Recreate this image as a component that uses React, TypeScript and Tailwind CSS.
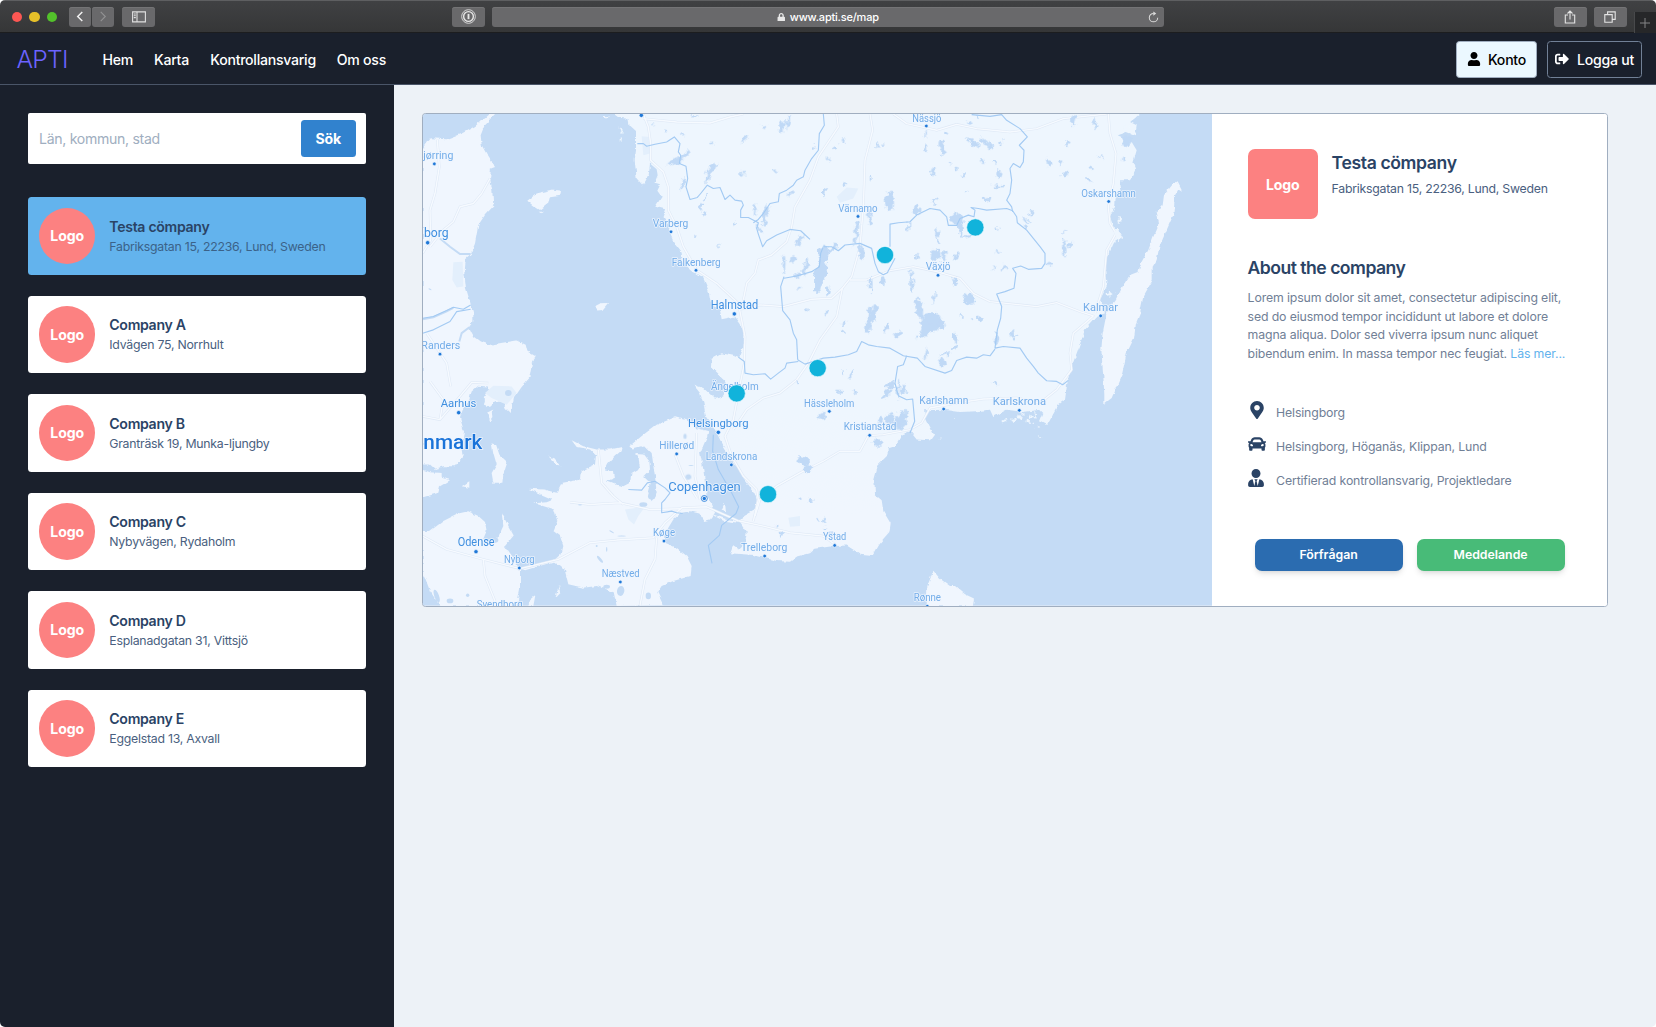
import React from 'react';
import { FaUser, FaSignOutAlt, FaMapMarkerAlt, FaCar, FaUserTie, FaLock } from 'react-icons/fa';

/* ---------- Map data (map units: 3 per pixel) ---------- */

const SWEDEN =
  'M607 38 L627 52 L655 55 L659 75 L678 92 L678 150 L674 180 L680 235 L699 256 L716 225 L720 190 L740 207 L743 225 L733 250 L750 255 L742 272 L755 290 L736 320 L768 328 L760 350 L775 375 L780 400 L793 430 L815 458 L818 488 L850 515 L880 535 L895 570 L903 610 L930 630 L935 658 L975 650 L992 672 L1003 710 L1000 745 L988 775 L970 768 L935 760 L905 777 L903 800 L938 835 L948 860 L940 890 L915 897 L880 865 L850 855 L870 880 L880 910 L888 950 L915 990 L940 1040 L965 1080 L1000 1135 L1033 1180 L1040 1200 L1035 1230 L1000 1250 L990 1270 L1010 1300 L1005 1330 L985 1350 L968 1340 L960 1362 L1030 1367 L1100 1385 L1140 1387 L1160 1372 L1200 1362 L1216 1348 L1275 1340 L1310 1338 L1350 1363 L1387 1367 L1405 1335 L1438 1298 L1442 1272 L1420 1235 L1415 1202 L1395 1185 L1393 1140 L1405 1095 L1433 1067 L1433 1047 L1455 1040 L1475 1005 L1500 995 L1520 1020 L1560 1022 L1572 1005 L1547 955 L1542 932 L1600 930 L1650 937 L1700 935 L1740 930 L1750 952 L1790 930 L1840 937 L1890 930 L1900 940 L1890 965 L1912 976 L1945 915 L1965 900 L1972 850 L1985 800 L2002 755 L2025 690 L2060 650 L2085 640 L2070 600 L2090 560 L2085 500 L2098 455 L2112 425 L2132 410 L2112 385 L2100 350 L2115 320 L2118 285 L2135 280 L2130 240 L2160 240 L2178 205 L2170 185 L2180 150 L2165 125 L2120 105 L2150 95 L2175 105 L2180 75 L2160 65 L2185 45 L2195 38 Z';

const SMOOTH_LAND = [
  'M38 148 L62 114 L110 117 L155 100 L195 78 L240 38 L258 38 L225 72 L212 105 L215 135 L232 165 L255 200 L243 205 L240 235 L247 270 L250 318 L225 345 L205 375 L195 430 L182 462 L168 475 L163 520 L168 565 L182 612 L190 640 L190 665 L176 683 L190 710 L210 725 L240 735 L320 722 L347 735 L352 755 L378 770 L366 788 L358 835 L335 862 L312 895 L303 940 L287 925 L280 905 L255 908 L240 922 L222 915 L225 895 L237 870 L232 860 L205 858 L185 875 L178 900 L160 925 L150 955 L162 995 L155 1050 L158 1070 L135 1100 L100 1100 L75 1108 L60 1095 L38 1095 Z',
  'M38 1110 L60 1118 L95 1120 L95 1135 L120 1142 L90 1160 L85 1180 L38 1195 Z',
  'M245 1030 L258 1035 L268 1065 L292 1088 L280 1125 L277 1150 L250 1150 L245 1120 L260 1095 L250 1060 Z',
  'M155 1160 L178 1145 L178 1165 Z M415 1070 L435 1078 L455 1100 L440 1095 Z M230 940 L248 930 L250 955 L242 967 Z',
  'M38 1295 L60 1295 L100 1265 L145 1242 L175 1235 L205 1250 L225 1268 L230 1295 L220 1318 L248 1330 L265 1312 L280 1280 L275 1240 L290 1270 L311 1308 L295 1328 L285 1340 L310 1375 L330 1415 L330 1470 L320 1520 L90 1520 L60 1475 L45 1435 L38 1420 Z',
  'M355 1520 L365 1495 L376 1488 L370 1520 Z M475 1440 L487 1420 L480 1445 Z M437 1493 L447 1455 L450 1480 Z',
  'M485 1022 L520 1040 L560 1050 L600 1050 L635 1042 L632 1055 L615 1070 L595 1090 L585 1110 L612 1115 L615 1135 L590 1145 L615 1155 L640 1160 L660 1150 L665 1120 L690 1105 L685 1070 L675 1060 L700 1062 L718 1085 L720 1110 L700 1130 L720 1150 L712 1180 L725 1205 L740 1180 L735 1130 L725 1060 L705 1040 L668 1050 L658 1040 L700 1005 L740 975 L795 953 L830 962 L860 985 L895 995 L890 1015 L870 1060 L880 1110 L885 1150 L890 1190 L905 1215 L915 1240 L900 1260 L883 1265 L868 1242 L840 1235 L815 1240 L790 1260 L775 1285 L765 1310 L765 1330 L800 1345 L830 1370 L845 1400 L842 1430 L790 1445 L755 1460 L742 1480 L760 1518 L620 1520 L612 1480 L560 1460 L520 1465 L475 1455 L465 1415 L450 1400 L430 1385 L455 1362 L460 1340 L450 1310 L430 1295 L442 1265 L432 1230 L373 1211 L410 1208 L430 1200 L355 1168 L400 1170 L440 1180 L455 1150 L510 1140 L512 1115 L555 1095 L558 1068 L540 1050 L500 1042 Z',
  'M1550 1520 L1552 1460 L1570 1414 L1590 1438 L1620 1460 L1635 1460 L1665 1485 L1692 1498 L1688 1520 Z',
  'M352 302 L380 280 L430 268 L453 272 L452 284 L420 288 L415 310 L390 330 L368 315 Z M386 335 L402 335 L394 340 Z',
  'M553 620 L572 610 L594 609 L577 630 L562 632 Z',
  'M2290 250 L2300 243 L2316 275 L2305 268 L2295 285 L2293 310 L2290 345 L2270 390 L2248 440 L2240 480 L2228 500 L2228 540 L2200 590 L2190 640 L2178 670 L2172 715 L2150 760 L2137 820 L2105 895 L2083 912 L2083 885 L2080 830 L2074 750 L2078 700 L2090 640 L2118 600 L2140 555 L2160 525 L2185 515 L2195 485 L2215 450 L2230 410 L2247 370 L2240 335 L2258 315 L2262 285 Z',
  'M895 1240 L945 1258 L985 1264 L985 1270 L940 1264 Z M330 1408 L440 1378 L442 1384 L340 1414 Z M935 1230 L945 1208 L948 1235 Z',
];

/* x, y, width, height, rotation */
const LAKES: number[][] = [
  [1115, 76, 18, 34, 20], [1134, 66, 10, 40, 10], [1060, 76, 14, 8, 10], [1000, 118, 30, 10, -35], [905, 130, 14, 12, 0],
  [768, 92, 10, 8, 0], [820, 102, 20, 6, 0], [728, 72, 14, 5, 0], [855, 45, 20, 6, 0], [800, 180, 72, 14, -25], [830, 160, 30, 12, -50],
  [905, 205, 12, 50, 40], [893, 235, 12, 26, 20], [820, 250, 12, 30, 10], [998, 221, 14, 12, 0], [1097, 209, 14, 8, 0],
  [873, 318, 10, 26, 20], [882, 342, 7, 20, -20], [886, 290, 5, 24, 20], [973, 366, 10, 10, 0], [860, 407, 14, 6, -20], [925, 438, 20, 5, 5],
  [1138, 282, 22, 8, -40], [1066, 345, 14, 72, 12], [1036, 330, 8, 40, 5], [1046, 385, 10, 30, -30], [1170, 420, 14, 40, 20],
  [1122, 490, 9, 56, 0], [1150, 478, 20, 18, 0], [1186, 500, 14, 50, 10], [1162, 525, 20, 14, 0], [1168, 565, 10, 8, 0], [1192, 632, 10, 14, 20],
  [1272, 142, 14, 8, -20], [1300, 118, 8, 20, 10], [1257, 176, 7, 16, 0], [1403, 134, 8, 22, 0], [1420, 133, 5, 8, 0], [1211, 142, 8, 14, 0],
  [1544, 102, 7, 18, 0], [1547, 145, 9, 22, 0], [1598, 142, 18, 44, -10], [1608, 100, 14, 9, 30], [1678, 68, 14, 10, 30], [1690, 126, 50, 14, 30],
  [1722, 125, 40, 12, 35], [1745, 138, 22, 14, 30], [1568, 214, 10, 26, 10], [1382, 237, 6, 18, 0], [1303, 252, 12, 12, 0], [1243, 278, 8, 22, 0],
  [1440, 305, 24, 60, -5], [1378, 350, 12, 50, -15], [1340, 390, 14, 56, 5], [1333, 425, 10, 20, 0], [1354, 455, 18, 50, -10],
  [1520, 330, 16, 36, 0], [1572, 305, 8, 26, 30], [1495, 377, 6, 30, 0], [1580, 400, 9, 30, 0], [1584, 425, 8, 18, 0], [1575, 465, 34, 28, 20],
  [1602, 468, 14, 42, 10], [1640, 470, 12, 28, 30], [1522, 470, 14, 10, 0], [1640, 355, 38, 30, 0], [1652, 385, 14, 50, -10], [1672, 408, 28, 10, -10],
  [1765, 257, 38, 8, 5], [1730, 298, 28, 8, -10], [1671, 275, 18, 5, 0], [1620, 192, 7, 8, 0], [1643, 205, 10, 16, -30], [1660, 225, 12, 14, 0],
  [1716, 185, 10, 26, -15], [1752, 186, 14, 8, 0], [1765, 222, 18, 20, 0], [1773, 128, 10, 16, 0], [1700, 50, 8, 16, 0],
  [1990, 55, 16, 40, 0], [2055, 70, 8, 40, 0], [1915, 185, 12, 26, -15], [1952, 187, 14, 14, 0], [1965, 222, 20, 12, 0], [1975, 128, 12, 18, 0],
  [2072, 168, 30, 4, 30], [2045, 204, 14, 8, 30], [2036, 240, 20, 12, 20], [2142, 177, 12, 12, 0], [2150, 120, 30, 30, 0],
  [1863, 341, 18, 9, -20], [1848, 360, 8, 30, -40], [1845, 378, 12, 10, 20], [1963, 445, 12, 55, -5], [1980, 435, 12, 20, 40], [1965, 396, 16, 5, 0],
  [1920, 490, 22, 8, 0], [1761, 387, 10, 10, 0], [1763, 456, 12, 7, 0], [1782, 500, 14, 14, 40], [1751, 507, 8, 16, 10],
  [1240, 460, 34, 46, 10], [1232, 520, 34, 90, 15], [1222, 560, 20, 40, 0], [1262, 450, 10, 40, 50], [1255, 575, 8, 30, 0], [1275, 438, 18, 14, 0],
  [1418, 545, 12, 20, 0], [1382, 555, 6, 50, 0], [1385, 645, 28, 50, 20], [1375, 680, 18, 40, 10], [1395, 625, 12, 24, 0], [1430, 680, 12, 28, 10],
  [1505, 545, 9, 70, -5], [1527, 625, 22, 60, -12], [1560, 670, 60, 60, -20], [1580, 660, 30, 40, 0], [1545, 690, 22, 50, 20], [1595, 675, 24, 24, 0],
  [1572, 595, 6, 40, 20], [1680, 600, 32, 34, 10], [1664, 585, 14, 10, 30], [1635, 545, 14, 18, 0], [1708, 658, 12, 22, -20], [1635, 712, 8, 30, 0],
  [1635, 740, 10, 20, 20], [1605, 762, 40, 8, -20], [1462, 705, 30, 14, -50], [1550, 760, 8, 40, 10], [1520, 712, 12, 8, 30], [1300, 672, 12, 14, 0],
  [1299, 693, 10, 8, 0], [1252, 640, 10, 14, 0], [1655, 645, 6, 14, 0], [1681, 661, 14, 5, -20], [1808, 705, 24, 16, 50], [1760, 715, 14, 30, 0],
  [1600, 788, 26, 24, 0], [1298, 816, 6, 16, 0], [1325, 822, 10, 24, 20], [1288, 875, 16, 10, 0], [1332, 877, 12, 12, 0], [1238, 948, 18, 16, 0],
  [1755, 850, 16, 8, 40], [1442, 855, 26, 20, -20], [1430, 882, 14, 40, 40], [1480, 870, 16, 24, 0], [1464, 870, 8, 60, 0], [1472, 962, 34, 50, 20],
  [1438, 958, 22, 40, 30], [1455, 975, 30, 20, 0], [1488, 948, 8, 40, 0], [1410, 965, 12, 30, 30], [1403, 1030, 18, 30, -30], [1178, 1085, 40, 22, 20],
  [1195, 1105, 30, 20, 0], [1204, 1200, 18, 16, 0], [1168, 1192, 12, 8, 0], [1098, 1275, 8, 6, 0], [1115, 1308, 8, 14, 0], [1226, 1258, 8, 12, 0],
  [1245, 1265, 8, 16, 0], [1244, 1285, 10, 6, 0], [1165, 848, 10, 8, -30], [1260, 1303, 8, 16, 0],
];

const COAST_BITS: number[][] = [
  [635, 90, 10, 18, 0], [632, 118, 6, 16, 0], [590, 48, 12, 8, 0], [640, 100, 6, 10, 0], [2128, 360, 12, 12, 0], [2098, 580, 18, 12, -30],
  [1785, 962, 12, 8, 0], [1812, 960, 16, 14, 0], [1830, 950, 14, 20, 10], [1855, 965, 18, 14, 30], [1890, 1010, 5, 6, 0], [1595, 1018, 5, 4, 0],
  [1633, 956, 4, 3, 0], [2125, 405, 24, 30, 0], [1870, 950, 20, 10, 20], [2150, 80, 16, 20, 0], [1885, 985, 10, 4, 0],
];

/* Inlets and lakes inside Denmark */
const DK_WATER: number[][] = [
  [205, 875, 24, 22, 0], [210, 905, 28, 20, 0], [295, 880, 20, 18, 0], [835, 1132, 18, 16, -20], [783, 1035, 14, 18, -30], [825, 1010, 10, 16, 0],
  [570, 1380, 26, 8, 50], [605, 1297, 16, 4, 30], [635, 1310, 26, 3, 0], [843, 1098, 16, 3, 0], [510, 1216, 12, 4, 0], [590, 1350, 4, 14, 0],
  [560, 1340, 6, 6, 0], [700, 1215, 24, 14, 0], [725, 1190, 22, 20, 0], [60, 568, 10, 4, 30], [632, 1475, 22, 30, 10], [80, 1490, 14, 40, -20],
  [120, 1505, 20, 14, 0], [173, 1488, 10, 10, 0], [715, 1490, 16, 20, 0], [590, 1462, 20, 12, 0], [255, 1322, 20, 16, 0],
];

const BORDERS = [
  'M682 130 L700 130 L710 138 L735 132 L770 125 L793 110 L810 130 L805 155 L812 165 L808 190 L828 198 L833 235 L828 260 L840 298 L862 292 L872 280 L892 255 L910 265 L930 262 L945 298 L960 285 L975 300 L995 303 L1000 315 L992 330 L992 352 L1015 352 L1045 368 L1040 385 L1045 402 L1058 440 L1070 422 L1100 405 L1140 388 L1172 392 L1200 418',
  'M1030 368 L1045 358 L1060 340 L1080 310 L1105 305 L1108 280 L1130 270 L1150 255 L1160 240 L1180 230 L1185 210 L1205 175 L1225 150 L1228 100 L1243 75 L1240 41',
  'M1122 530 L1112 560 L1118 632 L1140 660 L1150 700 L1160 720 L1163 780',
  'M1122 535 L1160 528 L1205 515 L1228 500 L1232 460 L1240 440 L1265 440 L1285 452 L1305 435 L1350 430 L1385 445 L1395 490 L1405 515 L1420 524 L1432 518 L1455 475',
  'M1440 440 L1440 372 L1465 368 L1500 365 L1520 345 L1560 325 L1590 330 L1610 350 L1615 376 L1640 376 L1650 355 L1675 345 L1692 350 L1695 330 L1683 322 L1705 325 L1730 330 L1790 325 L1808 332 L1820 350 L1822 368 L1850 390 L1890 440 L1905 460 L1905 490 L1895 505 L1855 508 L1832 498 L1808 505 L1818 520 L1812 565 L1785 575 L1760 582 L1775 620 L1772 655 L1762 690 L1755 745 L1780 740 L1830 745 L1850 775 L1870 800 L1885 820 L1910 843 L1940 845 L1958 855 L1975 842',
  'M1685 43 L1740 48 L1775 43 L1790 60 L1830 85 L1852 110 L1828 135 L1842 150 L1840 185 L1830 202 L1810 190 L1800 205 L1805 240 L1800 280 L1790 300 L1805 320 L1808 335',
  'M985 772 L1003 785 L1005 820 L1030 825 L1065 822 L1082 838 L1105 820 L1125 805 L1130 790 L1165 785',
  'M1163 780 L1185 793 L1240 775 L1275 772 L1315 765 L1340 755 L1355 725 L1375 735 L1400 740 L1440 745 L1480 768 L1522 775 L1545 800 L1605 820 L1625 812 L1640 782 L1670 772 L1700 775 L1720 765 L1740 768 L1755 748',
  'M1490 768 L1480 795 L1463 800 L1455 850 L1465 888 L1490 900 L1508 898 L1514 965 L1500 1000',
  'M910 1005 L908 1055 L925 1110 L965 1180 L986 1222 L978 1242 L935 1278 L928 1308 L895 1338 L906 1392',
  'M655 1170 L695 1172 L712 1150 L735 1145 L765 1165 L780 1180 L765 1200 L755 1210 L755 1240 L785 1235 L800 1240 L818 1242',
  'M38 655 L70 650 L110 632 L130 622 L160 628 L182 615',
  'M38 700 L70 690 L120 665 L140 635 L182 628',
];

const ROADS = [
  'M82 118 L88 200 L75 280 L60 330 L62 420 L38 460',
  'M240 235 L215 280 L190 310 L150 320 L130 365 L100 390 L60 440',
  'M700 41 L715 80 L722 130 L722 180 L760 215 L775 260 L775 330 L800 380 L820 440 L860 510 L920 550 L985 610 L1005 710 L1003 790 L985 880 L970 960 L945 1010 L965 1070 L1000 1130 L1040 1170 L1045 1200 L1030 1265',
  'M700 55 L800 65 L900 68 L960 50 L1000 41',
  'M985 630 L1050 615 L1120 620 L1205 598 L1265 595 L1297 565 L1325 530 L1350 440 L1360 320 L1365 180 L1388 90 L1380 41',
  'M1000 600 L1010 550 L1035 520 L1045 480 L1085 465 L1130 425 L1145 380 L1155 320 L1200 240 L1225 170 L1285 80 L1280 41',
  'M1297 565 L1280 650 L1230 720 L1195 790 L1160 840 L1110 880 L1060 895 L1010 930 L970 990',
  'M1320 540 L1370 540 L1440 512 L1510 500 L1580 515 L1650 535 L1690 580 L1740 605 L1880 620 L1940 608 L2010 635 L2050 648 L1990 700 L1980 760 L1985 810 L1940 870 L1890 910 L1820 895 L1720 898 L1640 910 L1560 925 L1535 970 L1500 990 L1420 1005 L1375 1008 L1350 1055 L1290 1055 L1240 1085 L1170 1120 L1100 1160 L1050 1200 L1035 1250',
  'M2095 41 L2100 100 L2118 160 L2110 250 L2095 320 L2100 370 L2118 400 L2090 450 L2080 560 L2055 640',
  'M1450 41 L1490 70 L1580 90 L1640 72 L1700 85 L1800 95 L1880 85 L1960 55 L2090 41',
  'M985 1264 L1060 1280 L1140 1300 L1240 1310 L1275 1335',
  'M38 1310 L110 1350 L220 1380 L330 1408 L445 1380 L540 1330 L620 1322 L730 1315 L765 1270 L815 1225 L890 1222 L985 1264',
  'M740 1315 L735 1380 L705 1440 L690 1518 M220 1380 L225 1430 L255 1505',
  'M480 1208 L540 1215 L630 1210 L720 1230 L815 1228 M565 1050 L575 1150 L610 1190 L640 1215 M860 1000 L855 1130 L870 1200 M795 1065 L820 1130 L860 1195',
  'M38 950 L90 960 L100 900 L60 845 M90 960 L150 890 L185 848 L235 850 M50 700 L110 790 L122 860',
];

type Place = { t: string; x: number; y: number; w: number; s: number; dot?: [number, number]; c?: string };
const PLACES: Place[] = [
  { t: 'jørring', x: 40, y: 176, w: 90, s: 31, dot: [73, 191] },
  { t: 'borg', x: 42, y: 411, w: 74, s: 38, dot: [53, 428], c: '#3f8fe0' },
  { t: 'Randers', x: 34, y: 747, w: 117, s: 31, dot: [90, 763] },
  { t: 'Varberg', x: 728, y: 381, w: 107, s: 31, dot: [783, 395] },
  { t: 'Falkenberg', x: 785, y: 497, w: 147, s: 31, dot: [858, 511] },
  { t: 'Halmstad', x: 902, y: 626, w: 143, s: 36, dot: [973, 642], c: '#3f8fe0' },
  { t: 'Nässjö', x: 1507, y: 64, w: 87, s: 31, dot: [1549, 77] },
  { t: 'Värnamo', x: 1285, y: 335, w: 118, s: 31, dot: [1344, 349] },
  { t: 'Växjö', x: 1547, y: 509, w: 75, s: 32, dot: [1584, 526] },
  { t: 'Oskarshamn', x: 2014, y: 290, w: 164, s: 31, dot: [2096, 304] },
  { t: 'Kalmar', x: 2019, y: 633, w: 105, s: 33, dot: [2072, 648] },
  { t: 'Aarhus', x: 92, y: 922, w: 107, s: 35, dot: [146, 939], c: '#3f8fe0' },
  { t: 'Ängelholm', x: 903, y: 872, w: 143, s: 31 },
  { t: 'Hässleholm', x: 1182, y: 921, w: 151, s: 31, dot: [1258, 935] },
  { t: 'Karlshamn', x: 1528, y: 914, w: 147, s: 31, dot: [1601, 928] },
  { t: 'Karlskrona', x: 1748, y: 917, w: 160, s: 33, dot: [1828, 932] },
  { t: 'Kristianstad', x: 1301, y: 992, w: 158, s: 31, dot: [1379, 1007] },
  { t: 'Helsingborg', x: 834, y: 981, w: 182, s: 35, dot: [925, 998], c: '#3f8fe0' },
  { t: 'Hillerød', x: 748, y: 1048, w: 105, s: 31, dot: [800, 1063] },
  { t: 'Landskrona', x: 887, y: 1082, w: 155, s: 31, dot: [964, 1096] },
  { t: 'Copenhagen', x: 775, y: 1176, w: 217, s: 40, c: '#3f8fe0' },
  { t: 'Odense', x: 143, y: 1341, w: 111, s: 36, dot: [198, 1357], c: '#3f8fe0' },
  { t: 'Nyborg', x: 282, y: 1392, w: 92, s: 31, dot: [328, 1406] },
  { t: 'Køge', x: 729, y: 1311, w: 66, s: 31, dot: [762, 1325] },
  { t: 'Næstved', x: 575, y: 1433, w: 114, s: 31, dot: [631, 1448] },
  { t: 'Trelleborg', x: 993, y: 1355, w: 139, s: 31, dot: [1064, 1370] },
  { t: 'Ystad', x: 1239, y: 1323, w: 70, s: 31, dot: [1274, 1338] },
  { t: 'Rønne', x: 1511, y: 1506, w: 82, s: 31, dot: [1552, 1521] },
  { t: 'Svendborg', x: 200, y: 1527, w: 138, s: 31 },
];

const PINS = [[1696, 382], [1425, 465], [1223, 805], [980, 881], [1074, 1184]];

function Blobs({ items, fill }: { items: number[][]; fill: string }) {
  return (
    <g fill={fill}>
      {items.map(([x, y, w, h, r], i) => (
        <ellipse key={i} cx={x} cy={y} rx={w / 2} ry={h / 2} transform={`rotate(${r} ${x} ${y})`} />
      ))}
    </g>
  );
}

function MapView() {
  return (
    <svg viewBox="39 41 2367 1478" preserveAspectRatio="none" className="block h-full w-full">
      <defs>
        <filter id="rough" x="-5%" y="-5%" width="110%" height="110%">
          <feTurbulence type="fractalNoise" baseFrequency="0.055" numOctaves="3" seed="7" />
          <feDisplacementMap in="SourceGraphic" scale="26" xChannelSelector="R" yChannelSelector="G" />
        </filter>
        <filter id="coast" x="-5%" y="-5%" width="110%" height="110%">
          <feTurbulence type="fractalNoise" baseFrequency="0.05" numOctaves="3" seed="3" />
          <feDisplacementMap in="SourceGraphic" scale="12" xChannelSelector="R" yChannelSelector="G" />
        </filter>
        <linearGradient id="ground" x1="0" y1="0" x2="0" y2="1">
          <stop offset="0" stopColor="#eef6fe" />
          <stop offset="0.65" stopColor="#eef6fe" />
          <stop offset="0.9" stopColor="#f0f6fe" />
        </linearGradient>
      </defs>
      <rect x="39" y="41" width="2367" height="1478" fill="#c4dbf5" />
      <g filter="url(#coast)">
        {SMOOTH_LAND.map((d, i) => (
          <path key={i} d={d} fill="#f0f6fe" />
        ))}
        <path d={SWEDEN} fill="url(#ground)" />
      </g>
      <g fill="#e3effc">
        <path d="M130 487 L158 485 L160 560 L140 563 L127 540 Z" />
        <path d="M695 108 L718 110 L720 160 L700 165 Z" />
        <path d="M1280 290 L1310 262 L1345 265 L1330 295 L1290 308 Z" />
        <path d="M645 1230 L705 1222 L685 1250 L672 1275 L655 1260 Z" />
        <path d="M1135 1255 L1170 1250 L1170 1280 L1140 1282 Z" />
        <path d="M225 880 L250 858 L305 860 L320 880 L290 915 L245 895 Z" />
      </g>
      <g fill="none" stroke="#dfe9f6" strokeWidth="7.5" strokeLinejoin="round">
        {ROADS.map((d, i) => (
          <path key={i} d={d} />
        ))}
      </g>
      <g fill="none" stroke="#f6faff" strokeWidth="4.2" strokeLinejoin="round">
        {ROADS.map((d, i) => (
          <path key={i} d={d} />
        ))}
      </g>
      <g filter="url(#rough)">
        <Blobs items={LAKES} fill="#c0d9f6" />
        <Blobs items={COAST_BITS} fill="#eef6fe" />
      </g>
      <Blobs items={DK_WATER} fill="#c4dbf5" />
      <g fill="none" stroke="#c4dbf5" strokeWidth="6">
        <path d="M90 415 L120 440 L150 462 L182 462" />
        <path d="M38 658 L70 652 L110 634 L130 624" />
        <path d="M148 725 L155 700 L178 682" />
      </g>
      <g fill="none" stroke="#a3caf3" strokeWidth="3.4" strokeLinejoin="round">
        {BORDERS.map((d, i) => (
          <path key={i} d={d} />
        ))}
      </g>
      <g
        className="font-['Roboto',sans-serif]"
        stroke="#f0f6fe"
        strokeOpacity="0.85"
        strokeWidth="5"
        strokeLinejoin="round"
        style={{ paintOrder: 'stroke' }}
      >
        {PLACES.map((p) => (
          <text key={p.t} x={p.x} y={p.y} fontSize={p.s} textLength={p.w} lengthAdjust="spacingAndGlyphs" fill={p.c ?? '#73ade9'}>
            {p.t}
          </text>
        ))}
        <text x="40" y="1048" fontSize="58" fontWeight="500" textLength="177" lengthAdjust="spacingAndGlyphs" fill="#1a73d9">
          nmark
        </text>
      </g>
      <g fill="#1f78d8" stroke="#f0f6fe" strokeWidth="2">
        {PLACES.map((p) => p.dot && <circle key={p.t} cx={p.dot[0]} cy={p.dot[1]} r={p.c ? 6.5 : 5.5} />)}
        <circle cx="694" cy="45" r="6.5" />
      </g>
      <circle cx="883" cy="1197" r="9" fill="#f0f6fe" stroke="#1f78d8" strokeWidth="2.4" />
      <circle cx="883" cy="1197" r="5" fill="#1f78d8" />
      <g fill="#11b3db" stroke="#eaf7fd" strokeWidth="2">
        {PINS.map(([x, y]) => (
          <circle key={x} cx={x} cy={y} r="26" />
        ))}
      </g>
    </svg>
  );
}

/* ---------- Browser window ---------- */

const toolButton =
  'flex h-[19.5px] shrink-0 items-center justify-center rounded-[3px] bg-[#69696b] shadow-[inset_0_1px_0_#747476]';

function BrowserBar() {
  return (
    <div className="flex h-[33px] shrink-0 items-start border-t border-[#5e5f61] bg-linear-to-b from-[#404143] to-[#353637] pt-[6px] shadow-[inset_0_-1px_0_#1c1d1f]">
      <div className="ml-[11.7px] flex h-[20px] items-center gap-[7px]">
        <span className="size-[10.6px] rounded-full bg-[#fc5753]" />
        <span className="size-[10.6px] rounded-full bg-[#e6c029]" />
        <span className="size-[10.6px] rounded-full bg-[#53c22b]" />
      </div>
      <div className={`${toolButton} ml-[11.5px] w-[22px]`}>
        <svg viewBox="0 0 8 12" className="h-[11px] w-[8px]" fill="none" stroke="#f0f0f0" strokeWidth="1.6">
          <path d="M6.5 1 L1.5 6 L6.5 11" />
        </svg>
      </div>
      <div className={`${toolButton} ml-px w-[22px]`}>
        <svg viewBox="0 0 8 12" className="h-[11px] w-[8px]" fill="none" stroke="#929294" strokeWidth="1.2">
          <path d="M1.5 1 L6.5 6 L1.5 11" />
        </svg>
      </div>
      <div className={`${toolButton} ml-[8.5px] w-[33px]`}>
        <svg viewBox="0 0 14 12" className="h-[12px] w-[14px]" fill="none" stroke="#e0e0e0" strokeWidth="1.1">
          <path d="M0.6 0.9 H13.4 V10.9 H0.6 Z M5 0.9 V10.9 M1.8 3 H3.8 M1.8 4.8 H3.8 M1.8 6.6 H3.8" />
        </svg>
      </div>
      <div className={`${toolButton} ml-[296.7px] w-[33px]`}>
        <svg viewBox="0 0 16 16" className="size-[15px]" fill="none" stroke="#e6e6e6">
          <circle cx="8" cy="8" r="7.3" strokeWidth="0.9" />
          <circle cx="8" cy="8" r="5.2" strokeWidth="1.5" />
          <path d="M8 5.2 V10.8" strokeWidth="2" />
        </svg>
      </div>
      <div className={`${toolButton} relative ml-[7px] w-[671.8px] text-[11px] text-white`}>
        <FaLock className="mr-[4px] size-[8.5px] text-[#e8e8e8]" />
        <span className="pt-px font-medium tracking-[-0.2px]">www.apti.se/map</span>
        <svg viewBox="0 0 12 13" className="absolute right-[5px] h-[12px] w-[11px]" fill="none" stroke="#dcdcdc" strokeWidth="1.1">
          <path d="M6 2.6 A4.6 4.6 0 1 0 10.6 7.2" />
          <path d="M5.8 0.4 L9 2.7 L5.8 5 Z" fill="#dcdcdc" stroke="none" />
        </svg>
      </div>
      <div className={`${toolButton} ml-auto w-[32.5px]`}>
        <svg viewBox="0 0 12 14" className="h-[14px] w-[12px]" fill="none" stroke="#e4e4e4" strokeWidth="1.1">
          <path d="M4 5 H1.3 V13 H10.7 V5 H8 M6 9.5 V1.2 M3.5 3.5 L6 1 L8.5 3.5" />
        </svg>
      </div>
      <div className={`${toolButton} ml-[7px] w-[33px]`}>
        <svg viewBox="0 0 12 12" className="size-[12px]" fill="none" stroke="#e4e4e4" strokeWidth="1.1">
          <path d="M0.8 3.6 H8.2 V11.2 H0.8 Z M3.6 3.6 V0.9 H11.2 V8.4 H8.2" />
        </svg>
      </div>
      <div className="mt-[5px] ml-[7px] flex h-[21px] w-[22.5px] shrink-0 items-center justify-center border-l border-[#48494b] bg-[#262729]">
        <svg viewBox="0 0 10 10" className="size-[10px]" stroke="#848587" strokeWidth="1">
          <path d="M5 0 V10 M0 5 H10" />
        </svg>
      </div>
    </div>
  );
}

function NavBar() {
  return (
    <nav className="flex h-[52px] shrink-0 items-center border-b border-[#4a5568] bg-[#1a202c] pt-[1.5px] text-[14.08px] font-medium tracking-[-0.25px] text-white">
      <span className="ml-[16.5px] w-[86px] text-[24.6px] leading-none font-[350] tracking-[-0.7px] text-[#6c63ff]">APTI</span>
      <span className="w-[51.5px] pt-[0.5px]">Hem</span>
      <span className="w-[56.3px] pt-[0.5px]">Karta</span>
      <span className="w-[126.5px] pt-[0.5px]">Kontrollansvarig</span>
      <span className="pt-[0.5px]">Om oss</span>
      <button className="ml-auto flex h-[37.5px] w-[80.5px] items-center rounded-[3.5px] border border-[#a0aec0] bg-[#ebf8ff] pl-[10px] text-black">
        <FaUser className="mr-[7px] size-[14px]" />
        <span className="pt-px">Konto</span>
      </button>
      <button className="mr-[14.5px] ml-[10.5px] flex h-[37.5px] w-[94.5px] items-center rounded-[3.5px] border border-[#718096] pl-[7px]">
        <FaSignOutAlt className="mr-[8px] size-[14px]" />
        <span className="pt-px whitespace-nowrap">Logga ut</span>
      </button>
    </nav>
  );
}

const COMPANIES = [
  { name: 'Testa cömpany', address: 'Fabriksgatan 15, 22236, Lund, Sweden', active: true },
  { name: 'Company A', address: 'Idvägen 75, Norrhult' },
  { name: 'Company B', address: 'Granträsk 19, Munka-ljungby' },
  { name: 'Company C', address: 'Nybyvägen, Rydaholm' },
  { name: 'Company D', address: 'Esplanadgatan 31, Vittsjö' },
  { name: 'Company E', address: 'Eggelstad 13, Axvall' },
];

function Sidebar() {
  return (
    <aside className="w-[394.3px] shrink-0 bg-[#1a202c] pt-[28px] pr-[28px] pl-[28.3px]">
      <div className="flex h-[50.5px] items-center rounded-[2px] bg-white pr-[10.5px] pl-[10.7px]">
        <span className="flex-1 text-[14.08px] tracking-[-0.3px] text-[#a0aec0]">Län, kommun, stad</span>
        <button className="h-[37px] w-[55px] rounded-[3.5px] bg-[#3182ce] text-[14.08px] font-bold tracking-[-0.2px] text-white">Sök</button>
      </div>
      <ul className="mt-[33.8px] flex flex-col gap-[21.1px]">
        {COMPANIES.map((c) => (
          <li
            key={c.name}
            className={`flex h-[77.4px] items-center rounded-[3.5px] pl-[10.7px] ${c.active ? 'bg-[#63b3ed]' : 'bg-white'}`}
          >
            <span className="flex size-[56.3px] items-center justify-center rounded-full bg-[#fc8181] text-[14.08px] font-bold tracking-[-0.1px] text-white">
              Logo
            </span>
            <div className="ml-[14px] pt-px">
              <p className="text-[14.08px] leading-[20px] font-semibold tracking-[-0.3px] text-[#2a4365]">{c.name}</p>
              <p className={`pt-px text-[12.32px] leading-[18.5px] tracking-[-0.25px] ${c.active ? 'text-[#3b6288]' : 'text-[#4a5f80]'}`}>{c.address}</p>
            </div>
          </li>
        ))}
      </ul>
    </aside>
  );
}

const FACTS = [
  { icon: <FaMapMarkerAlt className="size-[18px]" />, text: 'Helsingborg' },
  { icon: <FaCar className="size-[18px]" />, text: 'Helsingborg, Höganäs, Klippan, Lund' },
  { icon: <FaUserTie className="-ml-px size-[18px]" />, text: 'Certifierad kontrollansvarig, Projektledare' },
];

function Details() {
  return (
    <section className="flex-1 bg-white pt-[35px] pl-[35.6px]">
      <div className="flex">
        <span className="flex size-[70.4px] items-center justify-center rounded-[7px] bg-[#fc8181] text-[14.08px] font-bold tracking-[-0.1px] text-white">
          Logo
        </span>
        <div className="ml-[13.6px] pt-px">
          <h2 className="text-[17.6px] leading-[26.4px] font-semibold tracking-[-0.38px] text-[#2a4365]">Testa cömpany</h2>
          <p className="mt-[3.5px] text-[12.32px] leading-[18.5px] tracking-[-0.25px] text-[#4a6080]">Fabriksgatan 15, 22236, Lund, Sweden</p>
        </div>
      </div>
      <h3 className="mt-[35.5px] text-[17.6px] leading-[26.4px] font-semibold tracking-[-0.52px] text-[#2a4365]">About the company</h3>
      <p className="mt-[8px] text-[12.32px] leading-[18.48px] tracking-[-0.14px] whitespace-nowrap text-[#718096]">
        Lorem ipsum dolor sit amet, consectetur adipiscing elit,
        <br />
        sed do eiusmod tempor incididunt ut labore et dolore
        <br />
        magna aliqua. Dolor sed viverra ipsum nunc aliquet
        <br />
        bibendum enim. In massa tempor nec feugiat. <a className="text-[#63b3ed]">Läs mer...</a>
      </p>
      <ul className="mt-[32.5px] flex flex-col">
        {FACTS.map((f) => (
          <li key={f.text} className="flex h-[34.2px] items-center">
            <span className="mb-[6px] w-[28.5px] text-[#2a4365]">{f.icon}</span>
            <span className="pt-px text-[12.32px] tracking-[-0.15px] text-[#718096]">{f.text}</span>
          </li>
        ))}
      </ul>
      <div className="mt-[40.3px] ml-[7px] flex gap-[14px] text-[12.32px] font-semibold text-white">
        <button className="h-[32.6px] w-[148px] rounded-[7px] bg-[#2b6cb0] pt-px shadow-md">Förfrågan</button>
        <button className="h-[32.6px] w-[148px] rounded-[7px] bg-[#48bb78] pt-px shadow-md">Meddelande</button>
      </div>
    </section>
  );
}

export default function App() {
  return (
    <div className="h-[1027px] w-[1656px] overflow-hidden bg-white font-['Inter',sans-serif]">
      <div className="flex h-full flex-col overflow-hidden rounded-[5px]">
        <BrowserBar />
        <NavBar />
        <div className="flex min-h-0 flex-1">
          <Sidebar />
          <main className="flex-1 bg-[#edf2f7] pt-[28px] pl-[27.7px]">
            <div className="flex h-[493.6px] w-[1186px] overflow-hidden rounded-[3.5px] border border-[#a0aec0]">
              <div className="h-full w-[789px] shrink-0">
                <MapView />
              </div>
              <Details />
            </div>
          </main>
        </div>
      </div>
    </div>
  );
}
